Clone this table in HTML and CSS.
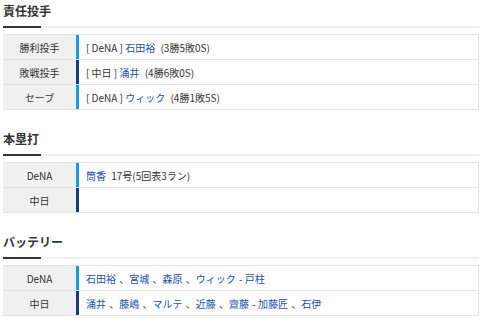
FILE: index.html
```html
<!DOCTYPE html>
<html lang="ja">
<head>
<meta charset="utf-8">
<link rel="stylesheet" href="styles.css">
</head>
<body>
<div class="page">
  <section class="sec">
    <h2 class="title">責任投手</h2>
    <div class="tbl">
      <div class="row"><div class="lbl">勝利投手</div><div class="val dena spaced">[ DeNA ] <a>石田裕</a> (3勝5敗0S)</div></div>
      <div class="row"><div class="lbl">敗戦投手</div><div class="val chu spaced">[ 中日 ] <a>涌井</a> (4勝6敗0S)</div></div>
      <div class="row"><div class="lbl">セーブ</div><div class="val dena spaced">[ DeNA ] <a>ウィック</a> (4勝1敗5S)</div></div>
    </div>
  </section>
  <section class="sec">
    <h2 class="title">本塁打</h2>
    <div class="tbl">
      <div class="row"><div class="lbl">DeNA</div><div class="val dena spaced"><a>筒香</a> 17号(5回表3ラン)</div></div>
      <div class="row"><div class="lbl">中日</div><div class="val chu"></div></div>
    </div>
  </section>
  <section class="sec">
    <h2 class="title">バッテリー</h2>
    <div class="tbl">
      <div class="row"><div class="lbl">DeNA</div><div class="val dena"><a>石田裕</a> 、<a>宮城</a> 、<a>森原</a> 、<a>ウィック</a> - <a>戸柱</a></div></div>
      <div class="row"><div class="lbl">中日</div><div class="val chu"><a>涌井</a> 、<a>藤嶋</a> 、<a>マルテ</a> 、<a>近藤</a> 、<a>齋藤</a> - <a>加藤匠</a> 、<a>石伊</a></div></div>
    </div>
  </section>
</div>
</body>
</html>
```

FILE: styles.css
```css
* { box-sizing: border-box; }
html, body { margin: 0; padding: 0; background: #fff; }
body {
  font-family: "Noto Sans CJK JP", "Noto Sans", sans-serif;
  color: #333;
  width: 480px;
  overflow: hidden;
}
.page { padding: 0 1px 0 3px; }
.sec { margin-bottom: 18px; }
.title {
  margin: 0;
  font-size: 12px;
  font-weight: bold;
  line-height: 18px;
  padding: 2px 0 8px;
  color: #333;
  background-image: linear-gradient(#333, #333), linear-gradient(#eeeeee, #eeeeee);
  background-size: 38px 2px, 100% 2px;
  background-position: left bottom, left bottom;
  background-repeat: no-repeat;
}
.tbl {
  margin-top: 6px;
  border: 1px solid #e3e3e3;
  border-left: none;
}
.row {
  display: grid;
  grid-template-columns: 73px 1fr;
  height: 25px;
  border-bottom: 1px solid #e3e3e3;
}
.row:last-child { height: 24px; border-bottom: none; }
.lbl {
  background: #f0f0f0;
  font-size: 10px;
  display: flex;
  align-items: center;
  justify-content: center;
  color: #333;
}
.val {
  font-size: 10px;
  display: flex;
  align-items: center;
  padding-left: 7px;
  white-space: pre;
  border-left: 3px solid #1a9be0;
}
.val.chu { border-left-color: #133f7c; }
.val a { color: #1d4fb3; text-decoration: none; margin-right: 1px; }
.spaced a { margin: 0 3px 0 2px; }
.spaced a:first-child { margin-left: 0; }
```
